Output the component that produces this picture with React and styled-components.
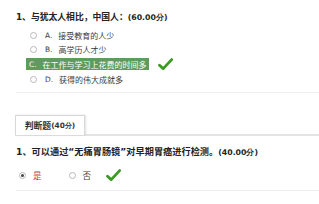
import React from 'react';
import styled, { createGlobalStyle } from 'styled-components';

const GlobalStyle = createGlobalStyle`
    html, body {
        margin: 0;
        padding: 0;
        background: #fff;
    }
    body {
        font-family: "DejaVu Sans", "Noto Sans CJK SC", sans-serif;
        color: #333;
    }
`;

const Page = styled.div`
    width: 319px;
    height: 204px;
    overflow: hidden;
    padding-left: 16px;
    box-sizing: border-box;
`;

const Block = styled.div`
    padding-top: ${(p) => p.$top || 0}px;
`;

const Title = styled.div`
    font-size: ${(p) => p.$size || 9.2}px;
    line-height: 12px;
    font-weight: bold;
    color: #222;
    white-space: nowrap;
    margin-top: ${(p) => p.$top || 0}px;
    .score {
        font-family: "DejaVu Sans", sans-serif;
        font-size: 7.8px;
    }
`;

const Options = styled.div`
    display: flex;
    flex-direction: column;
    margin-top: 4px;
`;

const Option = styled.div`
    display: flex;
    align-items: center;
    height: ${(p) => p.$h || 14}px;
    padding-left: ${(p) => (p.$picked ? 10 : 14)}px;
    font-size: 8px;
    color: #3c3c3c;
    white-space: nowrap;
    .letter {
        font-family: "DejaVu Sans", sans-serif;
        font-size: 7.4px;
        margin-right: 6px;
    }
`;

const Radio = styled.span`
    width: 7px;
    height: 7px;
    box-sizing: border-box;
    border-radius: 50%;
    border: 1px solid #b8b8b8;
    background: #fff;
    margin-right: ${(p) => p.$gap || 8}px;
    position: relative;
    flex-shrink: 0;
    &::after {
        content: '';
        display: ${(p) => (p.$on ? 'block' : 'none')};
        position: absolute;
        left: 1px;
        top: 1px;
        width: 3px;
        height: 3px;
        border-radius: 50%;
        background: #444;
    }
`;

const Picked = styled.span`
    display: flex;
    align-items: center;
    height: 12px;
    padding: 0 2px 0 3px;
    background: #5e9c5e;
    color: #fff;
    .letter {
        font-size: 7.4px;
        margin-right: 6px;
    }
`;

const Check = () => (
    <svg width="15" height="13" viewBox="0 0 15 13">
        <path d="M1.5 7.2 L5.2 10.6 L13.6 1.6" fill="none" stroke="#3b9a22" strokeWidth="2.8" strokeLinecap="round" strokeLinejoin="round" />
    </svg>
);

const CheckWrap = styled.span`
    display: inline-flex;
    margin-left: ${(p) => p.$gap || 9}px;
`;

const Divider = styled.div`
    height: 1px;
    background: #eeeeee;
    margin-top: ${(p) => p.$top || 0}px;
`;

const TabBar = styled.div`
    display: flex;
    margin-top: 22px;
    margin-left: -1px;
    border-bottom: 2px solid #e4e4e4;
    height: 19px;
`;

const Tab = styled.div`
    width: 70px;
    height: 20px;
    box-sizing: border-box;
    border: 1px solid #d8d8d8;
    border-bottom: none;
    background: #fff;
    box-shadow: 1px 0 2px rgba(0, 0, 0, 0.12);
    display: flex;
    align-items: center;
    justify-content: center;
    font-size: 8.8px;
    font-weight: bold;
    color: #333;
    .score {
        font-family: "DejaVu Sans", sans-serif;
        font-size: 7.4px;
    }
`;

const Answers = styled.div`
    display: flex;
    align-items: center;
    height: 14px;
    margin-top: 9px;
    padding-left: 3px;
    font-size: 8.6px;
`;

const Choice = styled.span`
    display: flex;
    align-items: center;
    color: ${(p) => (p.$red ? '#c8413c' : '#444')};
    margin-right: ${(p) => p.$gap || 0}px;
`;

const options = [
    { letter: 'A.', text: '接受教育的人少' },
    { letter: 'B.', text: '高学历人才少' },
    { letter: 'C.', text: '在工作与学习上花费的时间多', picked: true },
    { letter: 'D.', text: '获得的伟大成就多' },
];

const App = () => {
    return (
        <Page>
            <GlobalStyle />
            <Block $top={11}>
                <Title $size={8.8}>
                    1、与犹太人相比，中国人：<span className="score">(60.00分)</span>
                </Title>
                <Options>
                    {options.map((o) =>
                        o.picked ? (
                            <Option key={o.letter} $picked $h={16}>
                                <Picked>
                                    <span className="letter">{o.letter}</span>
                                    {o.text}
                                </Picked>
                                <CheckWrap>
                                    <Check />
                                </CheckWrap>
                            </Option>
                        ) : (
                            <Option key={o.letter}>
                                <Radio />
                                <span className="letter">{o.letter}</span>
                                {o.text}
                            </Option>
                        )
                    )}
                </Options>
                <Divider $top={6} />
            </Block>
            <TabBar>
                <Tab>
                    判断题<span className="score">(40分)</span>
                </Tab>
            </TabBar>
            <Title $top={10}>
                1、可以通过“无痛胃肠镜”对早期胃癌进行检测。<span className="score">(40.00分)</span>
            </Title>
            <Answers>
                <Choice $red $gap={27}>
                    <Radio $on $gap={7} />是
                </Choice>
                <Choice>
                    <Radio $gap={7} />否
                </Choice>
                <CheckWrap $gap={15}>
                    <Check />
                </CheckWrap>
            </Answers>
            <Divider $top={8} />
        </Page>
    );
};

export default App;
